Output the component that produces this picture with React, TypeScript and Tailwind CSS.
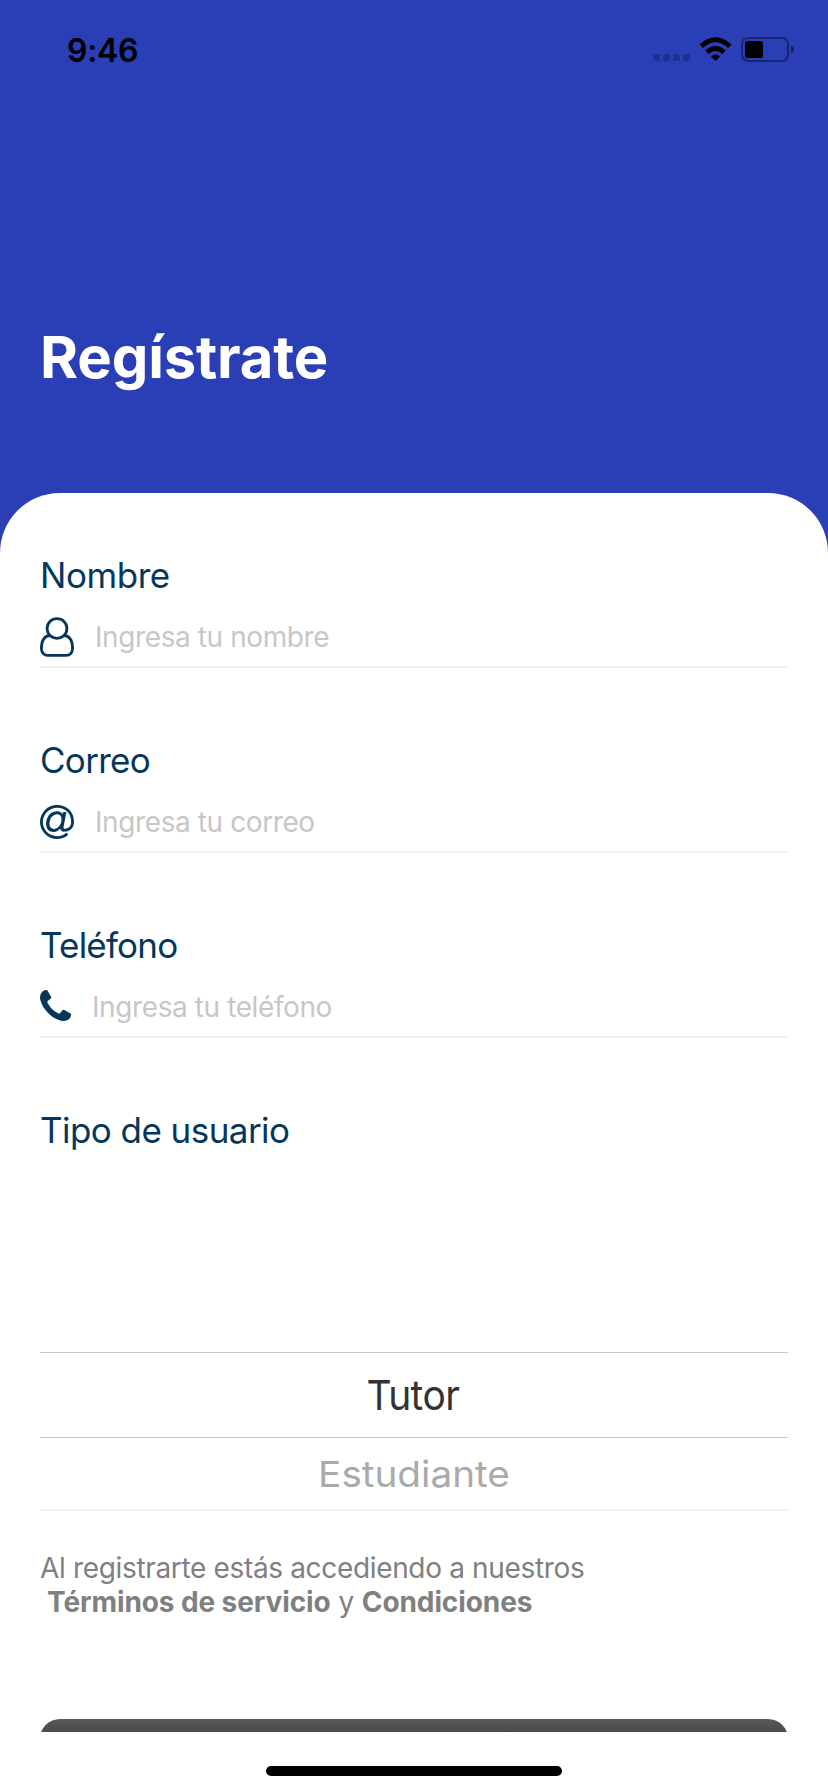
import type { ReactNode } from "react";

const navy = "#05375a";

function StatusBar() {
  return (
    <div className="flex h-[100px] items-start justify-between">
      <div className="pt-[31px] pl-[67px] text-[32px] leading-[40px] font-semibold tracking-[-0.3px] text-black">
        9:46
      </div>
      <svg className="mt-[30px] mr-[30px]" width="148" height="40" viewBox="650 30 148 40">
        <g fill="#000" fillOpacity="0.22">
          <rect x="653" y="54" width="7" height="7" rx="1.8" />
          <rect x="663" y="54" width="7" height="7" rx="1.8" />
          <rect x="673" y="54" width="7" height="7" rx="1.8" />
          <rect x="683" y="54" width="7" height="7" rx="1.8" />
        </g>
        <path d="M715.5 61 L711 56.5 Q715.5 52.6 720 56.5 Z" fill="#000" />
        <path d="M707 52.3 Q715.5 44.7 724 52.3" stroke="#000" strokeWidth="4.6" fill="none" />
        <path d="M701.2 46.2 Q715.5 33.2 729.8 46.2" stroke="#000" strokeWidth="4.8" fill="none" />
        <rect x="742" y="38" width="46" height="23" rx="6" fill="none" stroke="#000" strokeOpacity="0.4" strokeWidth="2" />
        <rect x="745" y="41" width="18" height="17" rx="2.5" fill="#000" />
        <path d="M791 45.5 Q794 47 794 49.5 T791 53.5 Z" fill="#000" fillOpacity="0.5" />
      </svg>
    </div>
  );
}

function UserIcon() {
  return (
    <svg width="34" height="40" viewBox="0 0 1536 1792" fill={navy}>
      <path d="M1201 784q47 14 89.5 38t89 73 79.5 115.5 55 172 22 236.5q0 154-100 263.5t-241 109.5h-854q-141 0-241-109.5t-100-263.5q0-131 22-236.5t55-172 79.5-115.5 89-73 89.5-38q-79-125-79-272 0-104 40.5-198.5t109.5-163.5 163.5-109.5 198.5-40.5 198.5 40.5 163.5 109.5 109.5 163.5 40.5 198.5q0 147-79 272zm-433-656q-159 0-271.5 112.5t-112.5 271.5 112.5 271.5 271.5 112.5 271.5-112.5 112.5-271.5-112.5-271.5-271.5-112.5zm427 1536q88 0 150.5-71.5t62.5-173.5q0-239-78.5-377t-225.5-145q-145 127-336 127t-336-127q-147 7-225.5 145t-78.5 377q0 102 62.5 173.5t150.5 71.5h854z" />
    </svg>
  );
}

function AtIcon() {
  return (
    <svg width="34" height="34" viewBox="128 128 1536 1536" fill={navy}>
      <path d="M1100 775q0-108-53.5-169t-147.5-61q-63 0-124 30.5t-110 84.5-79.5 137-30.5 180q0 112 53.5 173t150.5 61q96 0 176-66.5t122.5-166 42.5-203.5zm564 121q0 111-37 197t-98.5 135-131.5 74.5-145 27.5q-6 0-15.5.5t-16.5.5q-95 0-142-53-28-33-33-83-52 66-131.5 110t-173.5 44q-161 0-249.5-95.5t-88.5-269.5q0-157 66-290t179-210.5 246-77.5q87 0 155 35.5t106 99.5l2-19 11-56q1-6 5.5-12t9.5-6h118q5 0 13 11 5 5 3 16l-120 614q-5 24-5 48 0 39 12.5 52t44.5 13q28-1 57-5.5t73-24 77-50 57-89.5 24-137q0-292-174-466t-466-174q-130 0-248.5 51t-204 136.5-136.5 204-51 248.5 51 248.5 136.5 204 204 136.5 248.5 51q228 0 405-144 11-9 24-8t21 12l41 49q8 12 7 24-2 13-12 22-102 83-227.5 128t-258.5 45q-156 0-298-61t-245-164-164-245-61-298 61-298 164-245 245-164 298-61q344 0 556 212t212 556z" />
    </svg>
  );
}

function PhoneIcon() {
  return (
    <svg className="mb-[3px]" width="31" height="31" viewBox="192 128 1408 1408" fill={navy}>
      <path d="M1600 1240q0 27-10 70.5t-21 68.5q-21 50-122 106-94 51-186 51-27 0-52.5-3.5t-57.5-12.5-47.5-14.5-55.5-20.5-49-18q-98-35-175-83-128-79-264.5-215.5t-215.5-264.5q-48-77-83-175-3-9-18-49t-20.5-55.5-14.5-47.5-12.5-57.5-3.5-52.5q0-92 51-186 56-101 106-122 25-11 68.5-21t70.5-10q14 0 21 3 18 6 53 76 11 19 30 54t35 63.5 31 53.5q3 4 17.5 25t21.5 35.5 7 28.5q0 20-28.5 50t-62 55-62 53-28.5 46q0 9 5 22.5t8.5 20.5 14 24 11.5 19q76 137 174 235t235 174q2 1 19 11.5t24 14 20.5 8.5 22.5 5q18 0 46-28.5t53-62 55-62 50-28.5q14 0 28.5 7t35.5 21.5 25 17.5q25 15 53.5 31t63.5 35 54 30q70 35 76 53 3 7 3 21z" />
    </svg>
  );
}

function Label({ tracking, children }: { tracking: string; children: ReactNode }) {
  return <div className={`text-[35px] leading-[44px] text-[#05375a] ${tracking}`}>{children}</div>;
}

type FieldProps = { label: string; tracking: string; icon: ReactNode; hint: string };

function Field({ label, tracking, icon, hint }: FieldProps) {
  return (
    <div className="flex h-[185px] flex-col">
      <Label tracking={tracking}>{label}</Label>
      <div className="mt-[10px] flex h-[61px] items-center gap-[21px] border-b-2 border-[#f2f2f2] pt-[8px] pb-[7px]">
        {icon}
        <span className="text-[28px] leading-[36px] tracking-[-0.4px] text-[#c7c7c7]">{hint}</span>
      </div>
    </div>
  );
}

export default function App() {
  return (
    <div className="flex h-[1792px] w-[828px] flex-col overflow-hidden bg-[#2a3eb6] font-['Inter','Liberation_Sans',sans-serif]">
      <StatusBar />
      <h1 className="h-[393px] pt-[221px] pl-[40px] text-[58px] leading-[72px] font-bold tracking-[-0.15px] text-white">
        Regístrate
      </h1>
      <main className="flex grow flex-col rounded-t-[60px] bg-white px-[40px] pt-[60px]">
        <Field label="Nombre" tracking="tracking-[-0.45px]" icon={<UserIcon />} hint="Ingresa tu nombre" />
        <Field label="Correo" tracking="tracking-[-0.7px]" icon={<AtIcon />} hint="Ingresa tu correo" />
        <Field label="Teléfono" tracking="tracking-[-0.8px]" icon={<PhoneIcon />} hint="Ingresa tu teléfono" />
        <Label tracking="tracking-[-0.55px]">Tipo de usuario</Label>
        <div className="mt-[200px] flex h-[159px] flex-col border-b-2 border-[#f2f2f2] text-center">
          <div className="h-[86px] border-y border-[#c8c8c8] pr-[2px] text-[41px] leading-[85px] tracking-[-0.6px] text-[#333]">
            <span className="inline-block scale-x-[0.95]">Tutor</span>
          </div>
          <div className="scale-x-[1.075] text-[36px] leading-[72px] text-[#aaa]">Estudiante</div>
        </div>
        <p className="mt-[40px] text-[28px] leading-[34px] text-[#808080]">
          <span className="block tracking-[-0.34px]">Al registrarte estás accediendo a nuestros</span>
          <span className="block pl-[7px] tracking-[-0.1px]">
            <b className="font-bold">Términos de servicio</b> y <b className="font-bold">Condiciones</b>
          </span>
        </p>
        <div className="mt-[100px] h-[13px] overflow-hidden">
          <div className="h-[100px] rounded-[20px] bg-linear-to-b from-[#5a5a5a] to-[#000]" />
        </div>
        <div className="mt-[34px] h-[10px] w-[296px] self-center rounded-full bg-black" />
      </main>
    </div>
  );
}
